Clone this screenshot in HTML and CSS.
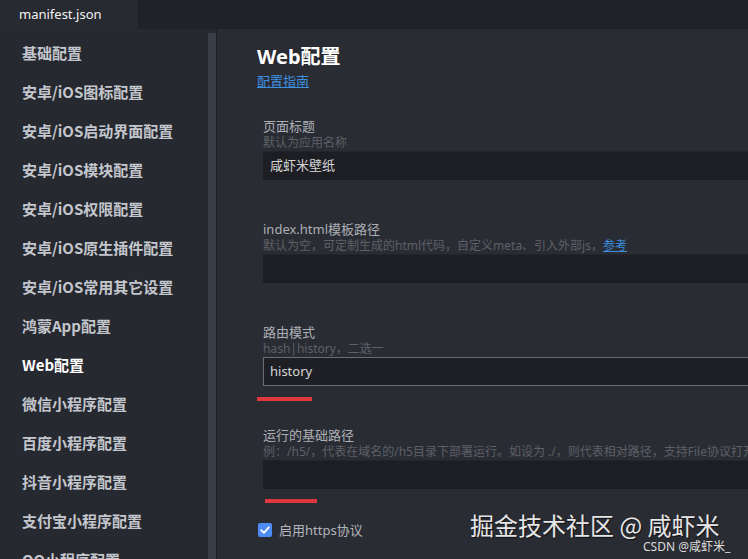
FILE: index.html
```html
<!DOCTYPE html>
<html lang="zh-CN">
<head>
<meta charset="utf-8">
<title>manifest.json</title>
<link rel="stylesheet" href="styles.css">
</head>
<body>
<div class="app">
  <div class="tabbar">
    <div class="tab">manifest.json</div>
  </div>
  <div class="content">
    <nav class="sidebar">
      <div class="nav-item">基础配置</div>
      <div class="nav-item">安卓/iOS图标配置</div>
      <div class="nav-item">安卓/iOS启动界面配置</div>
      <div class="nav-item">安卓/iOS模块配置</div>
      <div class="nav-item">安卓/iOS权限配置</div>
      <div class="nav-item">安卓/iOS原生插件配置</div>
      <div class="nav-item">安卓/iOS常用其它设置</div>
      <div class="nav-item">鸿蒙App配置</div>
      <div class="nav-item active">Web配置</div>
      <div class="nav-item">微信小程序配置</div>
      <div class="nav-item">百度小程序配置</div>
      <div class="nav-item">抖音小程序配置</div>
      <div class="nav-item">支付宝小程序配置</div>
      <div class="nav-item">QQ小程序配置</div>
    </nav>
    <div class="scrollbar"><div class="thumb"></div></div>
    <div class="divider"></div>
    <main class="main">
      <h1 class="title">Web配置</h1>
      <a class="guide" href="#">配置指南</a>
      <div class="fields">
        <div class="field">
          <div class="label">页面标题</div>
          <div class="hint">默认为应用名称</div>
          <div class="input">咸虾米壁纸</div>
        </div>
        <div class="field">
          <div class="label">index.html模板路径</div>
          <div class="hint">默认为空，可定制生成的html代码，自定义meta、引入外部js，<a class="ref" href="#">参考</a></div>
          <div class="input"></div>
        </div>
        <div class="field">
          <div class="label">路由模式</div>
          <div class="hint">hash|history，二选一</div>
          <div class="input focused">history</div>
          <div class="mark mark-a"></div>
        </div>
        <div class="field">
          <div class="label">运行的基础路径</div>
          <div class="hint">例：/h5/，代表在域名的/h5目录下部署运行。如设为 ./，则代表相对路径，支持File协议打开</div>
          <div class="input"></div>
          <div class="mark mark-b"></div>
        </div>
      </div>
      <label class="check">
        <span class="box"><svg viewBox="0 0 14 14" width="14" height="14"><path d="M3.2 7.2 L5.9 9.8 L10.8 4.4" fill="none" stroke="#ffffff" stroke-width="1.8" stroke-linecap="round" stroke-linejoin="round"/></svg></span>
        <span class="check-label">启用https协议</span>
      </label>
    </main>
  </div>
  <div class="wm-main">掘金技术社区 @ 咸虾米</div>
  <div class="wm-sub">CSDN @咸虾米_</div>
</div>
</body>
</html>
```
FILE: styles.css
```css
* { box-sizing: border-box; }
html, body {
  margin: 0;
  padding: 0;
  width: 748px;
  height: 559px;
  overflow: hidden;
  background: #2a2c34;
}
body {
  font-family: "Noto Sans", "Noto Sans CJK SC", sans-serif;
}
.app {
  position: relative;
  width: 748px;
  height: 559px;
  display: flex;
  flex-direction: column;
  overflow: hidden;
}
.tabbar {
  height: 29px;
  flex: none;
  background: #20222a;
  display: flex;
}
.tab {
  width: 138px;
  background: #282a32;
  color: #f2f2f2;
  font-size: 13px;
  line-height: 29px;
  padding-left: 19px;
}
.content {
  flex: 1;
  display: flex;
  min-height: 0;
}
.sidebar {
  width: 208px;
  flex: none;
  background: #272930;
  padding-top: 4px;
}
.nav-item {
  height: 39px;
  line-height: 39px;
  padding-left: 22px;
  font-size: 15px;
  font-weight: 700;
  color: #c3c7cd;
  font-family: "Noto Sans CJK SC", sans-serif;
  white-space: nowrap;
}
.nav-item.active { color: #ffffff; }
.scrollbar {
  width: 8px;
  flex: none;
  background: #272930;
  padding-top: 4px;
}
.thumb {
  height: 100%;
  background: #3a3e48;
}
.divider {
  width: 1px;
  flex: none;
  background: #1e2026;
}
.main {
  flex: 1;
  min-width: 0;
  overflow: hidden;
  padding: 16px 0 0 40px;
  background: #2a2c34;
}
.title {
  margin: 0;
  font-size: 20px;
  font-weight: 700;
  line-height: 24px;
  color: #ffffff;
  font-family: "Noto Sans", "Noto Sans CJK SC", sans-serif;
}
.guide {
  display: inline-block;
  margin-top: 2px;
  font-size: 13px;
  line-height: 18px;
  color: #3d8fe0;
  text-decoration: underline;
  font-family: "Noto Sans CJK SC", sans-serif;
}
.fields {
  padding-left: 6px;
  margin-top: 27px;
}
.field {
  position: relative;
  margin-bottom: 41px;
}
.field:last-child { margin-bottom: 31px; }
.label {
  font-size: 13px;
  line-height: 17px;
  color: #adafb4;
  white-space: nowrap;
}
.hint {
  font-size: 12px;
  line-height: 16px;
  color: #5d6067;
  white-space: nowrap;
}
.ref {
  color: #3d8fe0;
  text-decoration: underline;
}
.input {
  width: 640px;
  height: 29px;
  background: #1d1e23;
  border-top: 1px solid #23252b;
  color: #d6d6d6;
  font-size: 13px;
  line-height: 27px;
  padding-left: 7px;
}
.input.focused {
  border: 1px solid #6a6d74;
  background: #1e1f24;
  padding-left: 6px;
}
.mark {
  position: absolute;
  height: 4px;
  background: #e0373c;
}
.mark-a { left: -6px; top: 73px; width: 55px; }
.mark-b { left: 2px; top: 72px; width: 52px; }
.check {
  display: flex;
  align-items: center;
  gap: 7px;
  padding-left: 1px;
  height: 20px;
}
.box {
  width: 14px;
  height: 14px;
  border-radius: 2px;
  background: #4d8cf5;
  display: flex;
}
.check-label {
  font-size: 13px;
  color: #b3b5ba;
  line-height: 20px;
}
.wm-main {
  position: absolute;
  left: 470px;
  top: 511px;
  font-family: "Noto Sans CJK SC", sans-serif;
  font-size: 24px;
  line-height: 28px;
  color: #e6e6e6;
  text-shadow: 1px 1px 1px #111217;
  white-space: nowrap;
}
.wm-sub {
  position: absolute;
  left: 643px;
  top: 540px;
  font-family: "Noto Sans", "Noto Sans CJK SC", sans-serif;
  font-size: 12px;
  line-height: 14px;
  color: #dcdcdc;
  white-space: nowrap;
}
```
